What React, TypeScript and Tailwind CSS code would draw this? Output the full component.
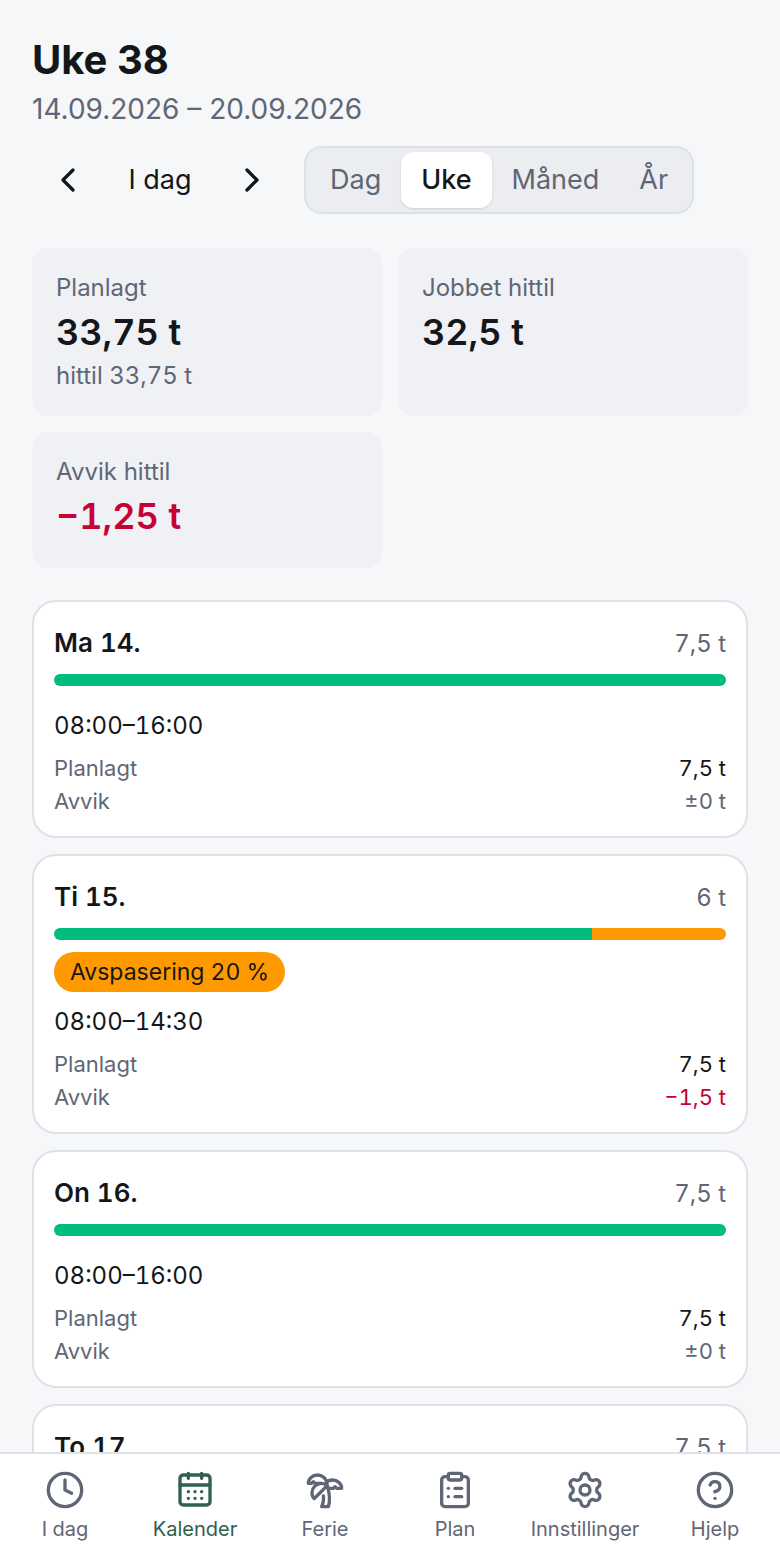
import React from 'react'
import {
  ChevronLeft,
  ChevronRight,
  CircleHelp,
  ClipboardList,
  Clock,
  Settings,
  TreePalm
} from 'lucide-react'

interface Segment {
  percent: number
  color: string
}

interface Day {
  name: string
  total: string
  segments: Segment[]
  absence?: string
  hours: string
  planned: string
  deviation: string
  negative?: boolean
}

interface StatProps {
  label: string
  value: string
  hint?: string
  negative?: boolean
}

interface IconProps {
  size?: number
}

const fullDay: Segment[] = [{ percent: 100, color: 'bg-emerald-500' }]

const days: Day[] = [
  { name: 'Ma 14.', total: '7,5 t', segments: fullDay, hours: '08:00–16:00', planned: '7,5 t', deviation: '±0 t' },
  {
    name: 'Ti 15.',
    total: '6 t',
    segments: [
      { percent: 80, color: 'bg-emerald-500' },
      { percent: 20, color: 'bg-amber-500' }
    ],
    absence: 'Avspasering 20 %',
    hours: '08:00–14:30',
    planned: '7,5 t',
    deviation: '−1,5 t',
    negative: true
  },
  { name: 'On 16.', total: '7,5 t', segments: fullDay, hours: '08:00–16:00', planned: '7,5 t', deviation: '±0 t' },
  { name: 'To 17.', total: '7,5 t', segments: fullDay, hours: '08:00–16:00', planned: '7,5 t', deviation: '±0 t' }
]

const views = ['Dag', 'Uke', 'Måned', 'År']

const CalendarIcon: React.FC<IconProps> = ({ size = 24 }) => (
  <svg
    width={size}
    height={size}
    viewBox="0 0 24 24"
    fill="none"
    stroke="currentColor"
    strokeWidth={2}
    strokeLinecap="round"
    strokeLinejoin="round"
  >
    <rect x="3" y="3" width="18" height="18" rx="2" />
    <path d="M8 2v3M16 2v3M3 9h18" />
    <path d="M8 13h.01M12 13h.01M16 13h.01M8 17h.01M12 17h.01M16 17h.01" />
  </svg>
)

const navItems: { label: string; icon: React.ComponentType<IconProps> }[] = [
  { label: 'I dag', icon: Clock },
  { label: 'Kalender', icon: CalendarIcon },
  { label: 'Ferie', icon: TreePalm },
  { label: 'Plan', icon: ClipboardList },
  { label: 'Innstillinger', icon: Settings },
  { label: 'Hjelp', icon: CircleHelp }
]

const Stat: React.FC<StatProps> = ({ label, value, hint, negative }) => (
  <div className="rounded-2xl bg-[#f0f1f5] p-6">
    <p className="text-[24px] leading-8 text-[#5f6675]">{label}</p>
    <p className={`text-[36px] leading-[56px] font-semibold tabular-nums ${negative ? 'text-rose-700' : ''}`}>
      {value}
    </p>
    {hint && <p className="text-[24px] leading-8 text-[#5f6675] tabular-nums">{hint}</p>}
  </div>
)

const DayCard: React.FC<{ day: Day }> = ({ day }) => (
  <li className="rounded-3xl border-2 border-[#dfe1e8] bg-white px-5 pt-5 pb-[18px] tabular-nums">
    <div className="flex h-10 items-baseline justify-between leading-[42px]">
      <h2 className="text-[26px] font-semibold">{day.name}</h2>
      <span className="text-[24px] text-[#5f6675]">{day.total}</span>
    </div>

    <div className="mt-3 flex h-3 overflow-hidden rounded-full">
      {day.segments.map((segment) => (
        <div key={segment.color} className={segment.color} style={{ width: `${segment.percent}%` }} />
      ))}
    </div>

    {day.absence && (
      <div className="mt-3 -mb-2.5 flex">
        <span className="rounded-full bg-amber-500 px-4 text-[23px] leading-10">{day.absence}</span>
      </div>
    )}

    <p className="mt-5 text-[24px] leading-10">{day.hours}</p>

    <dl className="mt-1.5 text-[22px] leading-[33px]">
      <div className="flex justify-between">
        <dt className="text-[#5f6675]">Planlagt</dt>
        <dd>{day.planned}</dd>
      </div>
      <div className="flex justify-between">
        <dt className="text-[#5f6675]">Avvik</dt>
        <dd className={day.negative ? 'text-rose-700' : 'text-[#5f6675]'}>{day.deviation}</dd>
      </div>
    </dl>
  </li>
)

const App: React.FC = () => {
  const [view, setView] = React.useState('Uke')
  const [tab, setTab] = React.useState('Kalender')

  return (
    <div className="flex h-screen flex-col bg-[#f6f7f9] font-['Inter',sans-serif] text-[#14171a]">
      <main className="min-h-0 flex-1 overflow-y-auto p-8 [scrollbar-width:none]">
        <h1 className="text-[40px] leading-[56px] font-bold">Uke 38</h1>
        <p className="text-[28px] leading-[42px] text-[#5f6675]">14.09.2026 – 20.09.2026</p>

        <div className="mt-3.5 flex h-[72px] items-center gap-4 text-[27px]">
          <div className="flex h-16 items-center">
            <button aria-label="Forrige uke" className="flex h-16 w-[72px] items-center justify-center">
              <ChevronLeft size={40} strokeWidth={2} />
            </button>
            <button className="h-16 w-28 text-center">I dag</button>
            <button aria-label="Neste uke" className="flex h-16 w-[72px] items-center justify-center">
              <ChevronRight size={40} strokeWidth={2} />
            </button>
          </div>

          <div className="flex rounded-[18px] border-2 border-[#dfe1e8] bg-[#ecedf1] p-1">
            {views.map((name) => (
              <button
                key={name}
                onClick={() => setView(name)}
                aria-pressed={view === name}
                className={`rounded-xl px-5 leading-[56px] ${
                  view === name ? 'bg-white font-medium shadow' : 'text-[#5f6675]'
                }`}
              >
                {name}
              </button>
            ))}
          </div>
        </div>

        <section className="mt-8 grid grid-cols-2 gap-4">
          <Stat label="Planlagt" value="33,75 t" hint="hittil 33,75 t" />
          <Stat label="Jobbet hittil" value="32,5 t" />
          <Stat label="Avvik hittil" value="−1,25 t" negative />
        </section>

        <ul className="mt-8 space-y-4">
          {days.map((day) => (
            <DayCard key={day.name} day={day} />
          ))}
        </ul>
      </main>

      <nav className="grid shrink-0 grid-cols-6 border-t-2 border-[#dfe1e8] bg-white pt-4 pb-4">
        {navItems.map(({ label, icon: Icon }) => (
          <button
            key={label}
            onClick={() => setTab(label)}
            className={`flex flex-col items-center gap-1 text-[20px] leading-[30px] ${
              tab === label ? 'text-[#2f6050]' : 'text-[#5f6675]'
            }`}
          >
            <Icon size={40} />
            {label}
          </button>
        ))}
      </nav>
    </div>
  )
}

export default App
